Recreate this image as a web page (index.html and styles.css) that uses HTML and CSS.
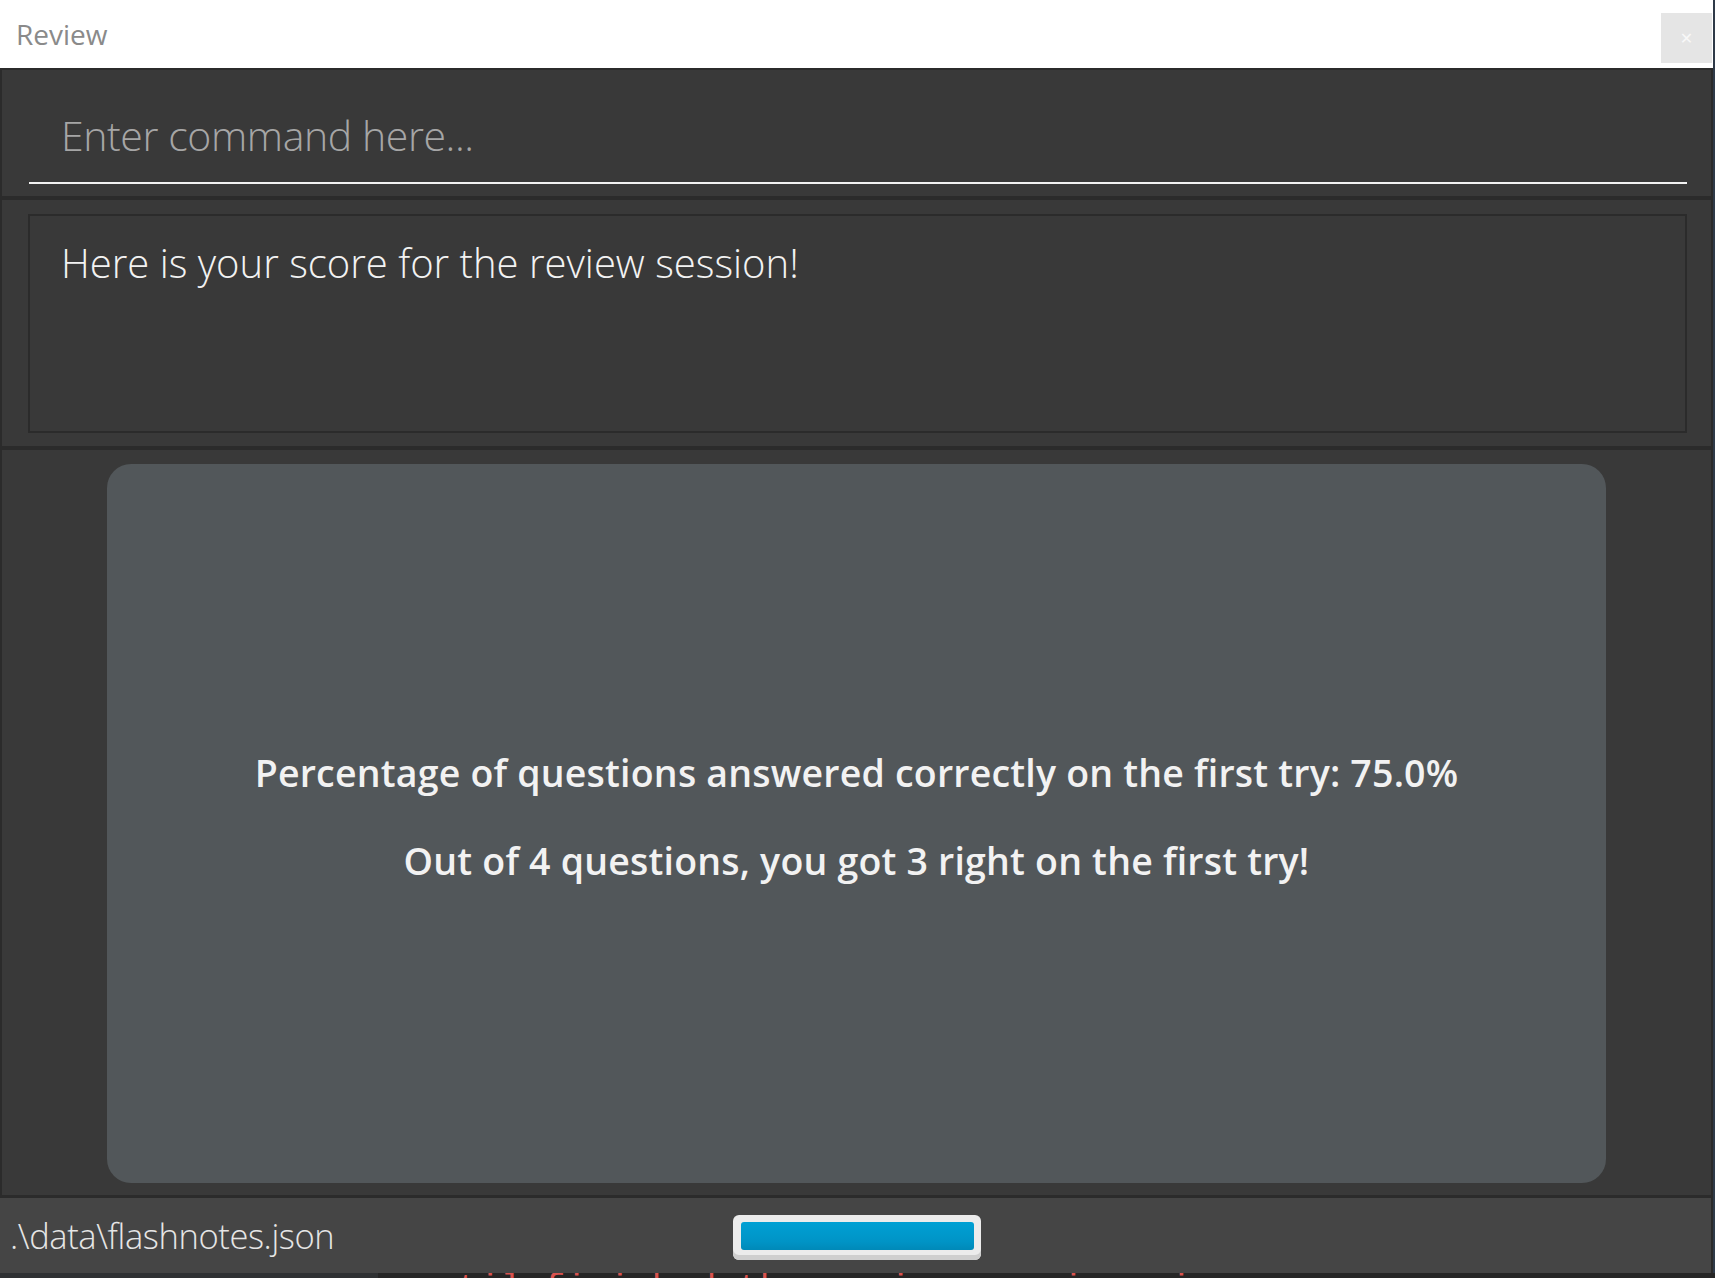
FILE: index.html
```html
<!DOCTYPE html>
<html lang="en">
<head>
<meta charset="utf-8">
<title>Review</title>
<link rel="stylesheet" href="styles.css">
</head>
<body>
<div class="screen">
  <div class="window">
    <header class="titlebar">
      <span class="title">Review</span>
      <button class="close" type="button">&#x2715;</button>
    </header>
    <section class="panel command-panel">
      <div class="command-field">Enter command here...</div>
    </section>
    <section class="panel result-panel">
      <div class="result-box">Here is your score for the review session!</div>
    </section>
    <section class="panel main-panel">
      <div class="score-card">
        <p class="score-line">Percentage of questions answered correctly on the first try: 75.0%</p>
        <p class="score-line">Out of 4 questions, you got 3 right on the first try!</p>
      </div>
    </section>
    <footer class="statusbar">
      <span class="path">.\data\flashnotes.json</span>
      <div class="progress"><div class="progress-fill"></div></div>
    </footer>
  </div>
  <div class="edge"></div>
</div>
<div class="behind">
  <div class="behind-left"></div>
  <div class="behind-text">until finished the review session via</div>
</div>
</body>
</html>
```

FILE: styles.css
```css
* { box-sizing: border-box; }
html, body { margin: 0; padding: 0; }
body {
  width: 1715px;
  height: 1278px;
  overflow: hidden;
  background: #262626;
  font-family: "Open Sans", "Noto Sans", sans-serif;
}
.screen { display: flex; height: 1273px; }
.window {
  width: 1713px;
  display: flex;
  flex-direction: column;
  background: #2b2b2b;
}
.edge { width: 2px; background: #2f3a48; }
.titlebar {
  height: 68px;
  background: #ffffff;
  display: flex;
  align-items: flex-start;
  justify-content: space-between;
  flex: none;
}
.title {
  margin: 15px 0 0 16px;
  font-size: 28px;
  color: #8a8a8a;
}
.close {
  margin: 13px 1px 0 0;
  width: 51px;
  height: 50px;
  border: none;
  background: #e5e5e5;
  color: #f8f8f8;
  font-size: 16px;
  font-family: "DejaVu Sans", sans-serif;
  padding: 0;
}
.panel {
  background: #393939;
  margin: 0 2px 0 2px;
  flex: none;
}
.command-panel {
  margin-top: 2px;
  height: 126px;
  padding: 30px 24px 0 27px;
}
.command-field {
  height: 84px;
  border-bottom: 2px solid #f2f2f2;
  padding: 0 0 0 32px;
  font-size: 41px;
  font-weight: 300;
  color: #a6a6a6;
  line-height: 70px;
  letter-spacing: -0.4px;
}
.result-panel {
  margin-top: 4px;
  height: 246px;
  padding: 14px 24px 13px 26px;
}
.result-box {
  height: 100%;
  border: 2px solid #2b2b2b;
  padding: 22px 31px;
  font-size: 40px;
  font-weight: 300;
  color: #f2f2f2;
  line-height: 50px;
}
.main-panel {
  margin-top: 4px;
  height: 745px;
  padding: 14px 0 12px 0;
  display: flex;
  justify-content: center;
}
.score-card {
  width: 1499px;
  height: 719px;
  background: #52575a;
  border-radius: 24px;
  display: flex;
  flex-direction: column;
  align-items: center;
  justify-content: center;
  gap: 38px;
  padding-bottom: 14px;
}
.score-line {
  margin: 0;
  font-size: 37.5px;
  font-weight: 600;
  color: #f2f2f2;
  line-height: 50px;
  letter-spacing: 0.2px;
}
.statusbar {
  margin: 3px 2px 0 0;
  height: 75px;
  background: #454545;
  display: flex;
  align-items: center;
  flex: none;
}
.path {
  margin-left: 10px;
  font-size: 34.5px;
  font-weight: 300;
  color: #e6e6e6;
  width: 723px;
  letter-spacing: -0.4px;
}
.progress {
  width: 248px;
  height: 45px;
  margin-top: 3px;
  border-radius: 6px;
  background: #ececec;
  box-shadow: inset 0 -5px 0 #cfcfcf;
  padding: 7px 7px 10px 8px;
}
.progress-fill {
  height: 100%;
  border-radius: 3px;
  background: linear-gradient(#00a0d4, #0094c6 70%, #0089b8);
}
.behind {
  display: flex;
  height: 5px;
  overflow: hidden;
}
.behind-left { width: 378px; background: #2f3133; flex: none; }
.behind-text {
  font-family: "Liberation Mono", monospace;
  font-size: 36px;
  line-height: 36px;
  color: #d9534f;
  margin-top: -1px;
  padding-left: 36px;
  white-space: nowrap;
}
```
